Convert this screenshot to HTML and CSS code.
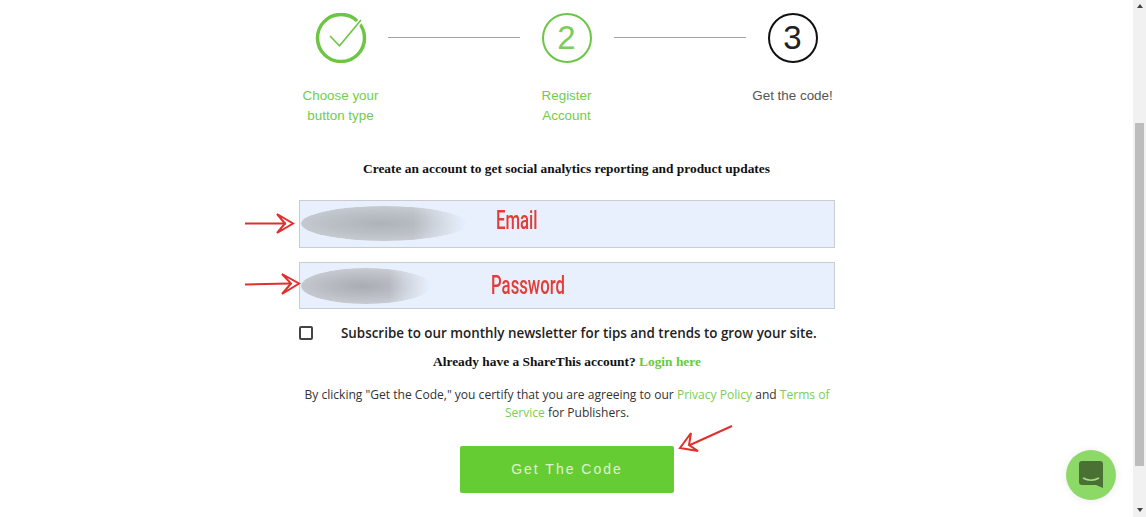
FILE: index.html
```html
<!DOCTYPE html>
<html lang="en">

<head>
    <meta charset="UTF-8">
    <title>Get the code</title>
    <link rel="stylesheet" href="styles.css">
</head>

<body>
    <div class="window">
        <div class="page">

            <!-- progress steps -->
            <div class="steps">
                <div class="step done">
                    <svg class="step_icon" width="52" height="50" viewBox="0 0 52 50">
                        <circle cx="26" cy="25" r="23.5" fill="none" stroke="#6cc644" stroke-width="3.5" />
                        <path d="M15 23 L24.5 32.8 L46 7" fill="none" stroke="#fff" stroke-width="5" />
                        <path d="M15 23 L24.5 32.8 L46 7" fill="none" stroke="#6cc644" stroke-width="1.6" />
                    </svg>
                    <div class="step_label">Choose your<br>button type</div>
                </div>
                <div class="step_line"></div>
                <div class="step done">
                    <div class="step_num num_green">2</div>
                    <div class="step_label">Register<br>Account</div>
                </div>
                <div class="step_line"></div>
                <div class="step">
                    <div class="step_num">3</div>
                    <div class="step_label">Get the code!</div>
                </div>
            </div>

            <h2 class="intro">Create an account to get social analytics reporting and product updates</h2>

            <form class="signup">
                <div class="field">
                    <input type="text" class="field_input">
                    <div class="smudge smudge_email"></div>
                    <span class="note note_email">Email</span>
                </div>
                <div class="field field_short">
                    <input type="text" class="field_input">
                    <div class="smudge smudge_password"></div>
                    <span class="note note_password">Password</span>
                </div>

                <div class="subscribe">
                    <span class="checkbox"></span>
                    <span class="subscribe_text">Subscribe to our monthly newsletter for tips and trends to grow your site.</span>
                </div>

                <p class="login">Already have a ShareThis account? <a href="#">Login here</a></p>

                <p class="terms">By clicking "Get the Code," you certify that you are agreeing to our <a href="#">Privacy Policy</a> and <a href="#">Terms of</a><br><a href="#">Service</a> for Publishers.</p>

                <button type="button" class="submit">Get The Code</button>
            </form>

            <!-- red arrows drawn over the screenshot -->
            <svg class="arrows" width="1133" height="517" viewBox="0 0 1133 517">
                <g fill="none" stroke="#e0302c" stroke-width="2">
                    <path d="M245 223.5 L286 223.5" />
                    <path d="M277 214 L293 223.5 L277 233 L285 223.5 Z" />
                    <path d="M245 284.5 L290 283.5" />
                    <path d="M282 274 L299 283.5 L282 294 L291 283.5 Z" />
                    <path d="M732 426 L690 445" />
                    <path d="M691 433 L680 448 L698 451 L689 445 Z" />
                </g>
            </svg>

            <div class="chat">
                <svg width="26" height="28" viewBox="0 0 26 28">
                    <path d="M4 0 H22 Q25 0 25 3 V27 L18 24 H4 Q1 24 1 21 V3 Q1 0 4 0 Z" fill="#4a7033" />
                    <path d="M5 17 Q13 21.5 21 17" fill="none" stroke="#a5dc86" stroke-width="1.6" />
                </svg>
            </div>
        </div>

        <div class="scrollbar">
            <span class="scroll_up"></span>
            <div class="scroll_track">
                <div class="scroll_thumb"></div>
            </div>
            <span class="scroll_down"></span>
        </div>
    </div>
</body>

</html>
```

FILE: styles.css
```css
html, body {
    margin: 0;
    height: 100%;
    overflow: hidden;
    background-color: #fff;
}

.window {
    display: flex;
    height: 517px;
}

.page {
    position: relative;
    flex: 1;
    display: flex;
    flex-direction: column;
    align-items: center;
    overflow: hidden;
}

/* steps */
.steps {
    display: flex;
    padding-top: 13px;
}
.step {
    width: 94px;
    display: flex;
    flex-direction: column;
    align-items: center;
}
.step_icon {
    display: block;
}
.step_num {
    width: 50px;
    height: 50px;
    box-sizing: border-box;
    border: 2.5px solid #111;
    border-radius: 50%;
    font-family: "Liberation Sans", sans-serif;
    font-size: 33px;
    line-height: 45px;
    text-align: center;
    color: #222;
}
.num_green {
    border-color: #6cc644;
    color: #7ccb5c;
}
.step_line {
    width: 132px;
    height: 1px;
    margin-top: 24px;
    background-color: #a3a3a3;
}
.step_label {
    margin-top: 23px;
    font-family: "Liberation Sans", sans-serif;
    font-size: 13.4px;
    line-height: 20px;
    text-align: center;
    white-space: nowrap;
    color: #555;
}
.done .step_label {
    color: #72cc4c;
}

.intro {
    margin: 33px 0 21px;
    font-family: "Liberation Serif", serif;
    font-size: 13.4px;
    line-height: 20px;
    font-weight: bold;
    color: #111;
}

/* form */
.signup {
    width: 536px;
    margin-left: 1px;
    display: flex;
    flex-direction: column;
    align-items: center;
}
.field {
    position: relative;
    width: 100%;
    height: 48px;
    margin-bottom: 14px;
}
.field_short {
    height: 47px;
}
.field_input {
    display: block;
    width: 100%;
    height: 100%;
    box-sizing: border-box;
    border: 1px solid #c9cdd2;
    background-color: #e8f0fe;
}
.smudge {
    position: absolute;
    left: 2px;
    border-radius: 50%;
    filter: blur(0.5px);
    -webkit-mask-image: linear-gradient(to right, #000 68%, transparent 100%);
    mask-image: linear-gradient(to right, #000 68%, transparent 100%);
}
.smudge_email {
    top: 6px;
    width: 166px;
    height: 35px;
    background: radial-gradient(ellipse at 48% 50%, #aeb2b9 0%, #bcc0c7 45%, #d4d7dd 100%);
}
.smudge_password {
    top: 6px;
    width: 130px;
    height: 36px;
    background: radial-gradient(ellipse at 47% 50%, #a9adb3 0%, #bcc0c6 45%, #d6d9df 100%);
}
.note {
    position: absolute;
    font-family: Roboto, sans-serif;
    font-size: 25px;
    font-weight: 500;
    line-height: 30px;
    color: #e23d36;
    transform: scaleX(0.67);
    transform-origin: left center;
    white-space: nowrap;
}
.note_email {
    left: 197px;
    top: 6px;
}
.note_password {
    left: 192px;
    top: 9px;
}

.subscribe {
    display: flex;
    align-items: center;
    width: 100%;
    height: 20px;
}
.checkbox {
    width: 14px;
    height: 14px;
    border: 2px solid #444;
    border-radius: 2px;
    box-sizing: border-box;
    flex: none;
}
.subscribe_text {
    margin-left: 28px;
    font-family: "Open Sans", sans-serif;
    font-size: 13.4px;
    font-weight: 600;
    white-space: nowrap;
    color: #222;
}

.login {
    margin: 9px 0 0;
    font-family: "Liberation Serif", serif;
    font-size: 13.4px;
    line-height: 20px;
    font-weight: bold;
    color: #111;
}
.login a {
    color: #66cc33;
    text-decoration: none;
}

.terms {
    margin: 14px 0 0;
    font-family: "Open Sans", sans-serif;
    font-size: 12.06px;
    line-height: 18px;
    text-align: center;
    color: #333;
}
.terms a {
    color: #78cf52;
    text-decoration: none;
}

.submit {
    width: 214px;
    height: 47px;
    margin-top: 24px;
    padding-bottom: 3px;
    border: none;
    border-radius: 2px;
    background-color: #66cc33;
    font-family: "Liberation Sans", sans-serif;
    font-size: 14px;
    letter-spacing: 2px;
    color: #dff3d2;
}

/* overlays */
.arrows {
    position: absolute;
    left: 0;
    top: 0;
    pointer-events: none;
}
.chat {
    position: absolute;
    left: 1066px;
    top: 450px;
    width: 50px;
    height: 50px;
    border-radius: 50%;
    background-color: #8cd968;
    box-shadow: 0 1px 8px rgba(0, 0, 0, 0.08);
    display: flex;
    align-items: center;
    justify-content: center;
}

/* scrollbar */
.scrollbar {
    width: 13px;
    height: 517px;
    display: flex;
    flex-direction: column;
    align-items: center;
    background-color: #f1f1f1;
}
.scroll_track {
    flex: 1;
    width: 100%;
    display: flex;
    flex-direction: column;
    justify-content: flex-end;
    padding-bottom: 42px;
    box-sizing: border-box;
}
.scroll_thumb {
    height: 343px;
    margin: 0 2px;
    background-color: #bdbdbd;
}
.scroll_up, .scroll_down {
    width: 0;
    height: 0;
    border-left: 3.5px solid transparent;
    border-right: 3.5px solid transparent;
}
.scroll_up {
    margin-top: 4px;
    border-bottom: 4px solid #444;
}
.scroll_down {
    margin-bottom: 5px;
    border-top: 4px solid #444;
}
```
